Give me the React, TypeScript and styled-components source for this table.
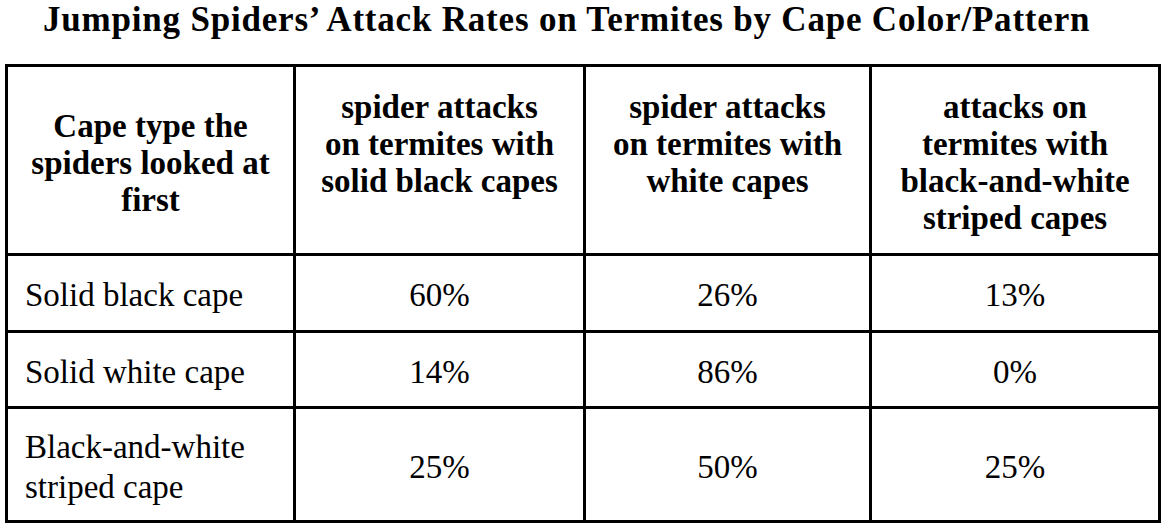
import React from "react";
import styled, { createGlobalStyle } from "styled-components";

const GlobalStyle = createGlobalStyle`
  body {
    margin: 0;
    background: #ffffff;
    color: #000000;
  }
`;

const Page = styled.div`
  width: 1164px;
  height: 532px;
  padding: 0 6px 0 5px;
  box-sizing: border-box;
  background: #ffffff;
  font-family: 'Liberation Serif', serif;
`;

const Title = styled.h1`
  margin: 0;
  height: 64px;
  padding-left: 38px;
  box-sizing: border-box;
  font-family: 'Liberation Serif', serif;
  font-size: 35px;
  letter-spacing: 0.8px;
  font-weight: bold;
  text-align: left;
  line-height: 39px;
  white-space: nowrap;
`;

const Table = styled.table`
  width: 100%;
  border-collapse: collapse;
  table-layout: fixed;
  border: 3px solid #000000;
`;

const Col = styled.col<{ $width: number }>`
  width: ${(p) => p.$width}px;
`;

const HeadCell = styled.th<{ $align?: "top" | "middle" }>`
  border: 3px solid #000000;
  font-family: 'Liberation Serif', serif;
  font-size: 33px;
  font-weight: bold;
  line-height: 37px;
  text-align: center;
  vertical-align: ${(p) => p.$align ?? "middle"};
  padding: 22px 8px 16px;
  white-space: nowrap;
`;

const LabelCell = styled.td`
  border: 3px solid #000000;
  font-family: 'Liberation Serif', serif;
  font-size: 33px;
  line-height: 40px;
  text-align: left;
  padding: 16px 17px 12px;
  white-space: nowrap;
`;

const ValueCell = styled.td`
  border: 3px solid #000000;
  font-family: 'Liberation Serif', serif;
  font-size: 33px;
  line-height: 40px;
  text-align: center;
  padding: 16px 8px 12px;
`;

const Row = styled.tr<{ $height: number }>`
  height: ${(p) => p.$height}px;
`;

const rows = [
  { label: ["Solid black cape"], values: ["60%", "26%", "13%"], height: 77 },
  { label: ["Solid white cape"], values: ["14%", "86%", "0%"], height: 76 },
  { label: ["Black-and-white", "striped cape"], values: ["25%", "50%", "25%"], height: 114 },
];

const Lines = ({ lines }: { lines: string[] }) => (
  <>
    {lines.map((l, i) => (
      <React.Fragment key={i}>
        {i > 0 && <br />}
        {l}
      </React.Fragment>
    ))}
  </>
);

export default function App() {
  return (
    <>
      <GlobalStyle />
      <Page>
        <Title>Jumping Spiders’ Attack Rates on Termites by Cape Color/Pattern</Title>
        <Table>
          <colgroup>
            <Col $width={288} />
            <Col $width={290} />
            <Col $width={286} />
            <Col $width={289} />
          </colgroup>
          <thead>
            <tr>
              <HeadCell>
                <Lines lines={["Cape type the", "spiders looked at", "first"]} />
              </HeadCell>
              <HeadCell $align="top">
                <Lines lines={["spider attacks", "on termites with", "solid black capes"]} />
              </HeadCell>
              <HeadCell $align="top">
                <Lines lines={["spider attacks", "on termites with", "white capes"]} />
              </HeadCell>
              <HeadCell>
                <Lines lines={["attacks on", "termites with", "black-and-white", "striped capes"]} />
              </HeadCell>
            </tr>
          </thead>
          <tbody>
            {rows.map((r) => (
              <Row key={r.label.join(" ")} $height={r.height}>
                <LabelCell>
                  <Lines lines={r.label} />
                </LabelCell>
                {r.values.map((v, i) => (
                  <ValueCell key={i}>{v}</ValueCell>
                ))}
              </Row>
            ))}
          </tbody>
        </Table>
      </Page>
    </>
  );
}
